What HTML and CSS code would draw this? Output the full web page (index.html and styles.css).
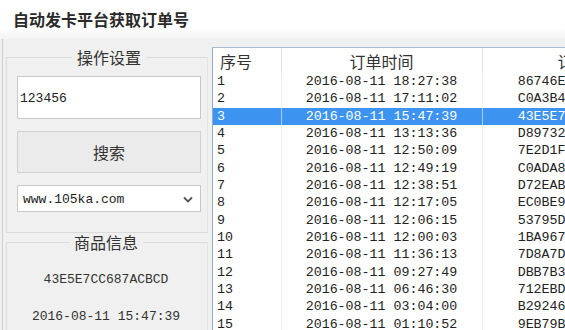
FILE: index.html
```html
<!DOCTYPE html>
<html lang="zh-CN">
<head>
<meta charset="utf-8">
<title>自动发卡平台获取订单号</title>
<link rel="stylesheet" href="styles.css">
</head>
<body>
  <div id="title">自动发卡平台获取订单号</div>

  <div id="main">
    <div id="left">
      <fieldset class="group">
        <legend>操作设置</legend>
        <div class="textbox">123456</div>
        <div class="button">搜索</div>
        <div class="combo">
          <span>www.105ka.com</span>
          <svg width="10" height="7" viewBox="0 0 10 7"><path d="M1 1.5 L5 5.5 L9 1.5" fill="none" stroke="#555" stroke-width="1.8"/></svg>
        </div>
      </fieldset>

      <fieldset class="group info">
        <legend>商品信息</legend>
        <div class="code">43E5E7CC687ACBCD</div>
        <div class="time">2016-08-11 15:47:39</div>
      </fieldset>
    </div>

    <div id="list">
      <table>
        <colgroup><col class="c1"><col class="c2"><col class="c3"></colgroup>
        <thead>
          <tr><th class="num">序号</th><th>订单时间</th><th>订单号</th></tr>
        </thead>
        <tbody>
          <tr><td class="num">1</td><td>2016-08-11 18:27:38</td><td>86746E2A91C0B7DF</td></tr>
          <tr><td class="num">2</td><td>2016-08-11 17:11:02</td><td>C0A3B4E7D28F1A65</td></tr>
          <tr class="sel"><td class="num">3</td><td>2016-08-11 15:47:39</td><td>43E5E7CC687ACBCD</td></tr>
          <tr><td class="num">4</td><td>2016-08-11 13:13:36</td><td>D89732B1E04CA9F8</td></tr>
          <tr><td class="num">5</td><td>2016-08-11 12:50:09</td><td>7E2D1F83AC56B902</td></tr>
          <tr><td class="num">6</td><td>2016-08-11 12:49:19</td><td>C0ADA85F217E4D3B</td></tr>
          <tr><td class="num">7</td><td>2016-08-11 12:38:51</td><td>D72EAB0946C1F8E3</td></tr>
          <tr><td class="num">8</td><td>2016-08-11 12:17:05</td><td>EC0BE95D38A72F14</td></tr>
          <tr><td class="num">9</td><td>2016-08-11 12:06:15</td><td>53795D8E0B2CA461</td></tr>
          <tr><td class="num">10</td><td>2016-08-11 12:00:03</td><td>1BA967F04D83E25C</td></tr>
          <tr><td class="num">11</td><td>2016-08-11 11:36:13</td><td>7D8A7D2C95B0E148</td></tr>
          <tr><td class="num">12</td><td>2016-08-11 09:27:49</td><td>DBB7B3610FE8C5A2</td></tr>
          <tr><td class="num">13</td><td>2016-08-11 06:46:30</td><td>712EBD4A83C9F056</td></tr>
          <tr><td class="num">14</td><td>2016-08-11 03:04:00</td><td>B292465E1D7C0A83</td></tr>
          <tr><td class="num">15</td><td>2016-08-11 01:10:52</td><td>9EB79B03C4F1D862</td></tr>
        </tbody>
      </table>
    </div>
  </div>
</body>
</html>
```

FILE: styles.css
```css
html, body { margin:0; padding:0; }
body { width:565px; height:330px; overflow:hidden; background:#f0f0f0;
       font-family:"Noto Sans CJK SC", sans-serif; color:#333; }

#title { height:39px; padding-left:13px; box-sizing:border-box;
         background:linear-gradient(#ffffff 0, #ffffff 70%, #f3f3f3 100%);
         font-size:16px; font-weight:bold; line-height:39px; color:#2a2a2a; }

#main { display:flex; height:291px; }

#left { width:202px; flex:none; margin-left:2px; border-left:1px solid #cfcfcf;
        padding-left:3px; display:flex; flex-direction:column; }

.group { margin:9px 0 0 0; padding:10px 6px 20px 10px; width:202px; box-sizing:border-box;
         border:1px solid #dadada; border-right-color:#e4e4e4; }
.group legend { margin:0 auto; padding:0 5px; font-size:16px; line-height:18px; color:#333; }

.textbox, .combo, .code, .time, td { font-family:"Liberation Mono", monospace; font-size:13px; }

.textbox { height:43px; box-sizing:border-box; background:#fff; border:1px solid #c9c9c9;
           display:flex; align-items:center; padding-left:2px; padding-top:2px; color:#222; }

.button { margin-top:12px; height:42px; box-sizing:border-box; border:1px solid #d2d2d2;
          background:#ebebeb; display:flex; align-items:center; justify-content:center;
          font-size:16px; color:#333; }

.combo { margin-top:12px; height:27px; box-sizing:border-box; background:#fff; border:1px solid #c9c9c9;
         display:flex; align-items:center; justify-content:space-between;
         padding:1px 7px 0 5px; color:#222; }

.group.info { margin-top:0; padding:19px 6px 20px 4px; flex:1; border-bottom:none; }
.info .code { text-align:center; line-height:20px; color:#333; }
.info .time { text-align:center; line-height:20px; margin-top:17px; color:#333; }

#list { margin:8px 0 0 4px; flex:1; background:#fff; border-left:1px solid #93aac6;
        border-top:1px solid #a9bcd2; overflow:hidden; }

table { border-collapse:collapse; table-layout:fixed; width:468px; }
col.c1 { width:68px; }
col.c2 { width:201px; }
col.c3 { width:199px; }

th { height:25px; padding:0; font-weight:normal; font-size:16px; line-height:24px;
     text-align:center; color:#333; border-right:1px solid #e3e3e3; white-space:nowrap; }
th.num { text-align:left; padding-left:7px; }

td { height:17.35px; padding:0; line-height:17.35px; text-align:center; color:#222;
     font-size:13.3px; border-right:1px solid #f0f0f0; white-space:nowrap; overflow:hidden; }
td.num { text-align:left; padding-left:4px; }

tr.sel td { background:#3d94f0; color:#fff; border-right-color:#a8cdf7; }
```
